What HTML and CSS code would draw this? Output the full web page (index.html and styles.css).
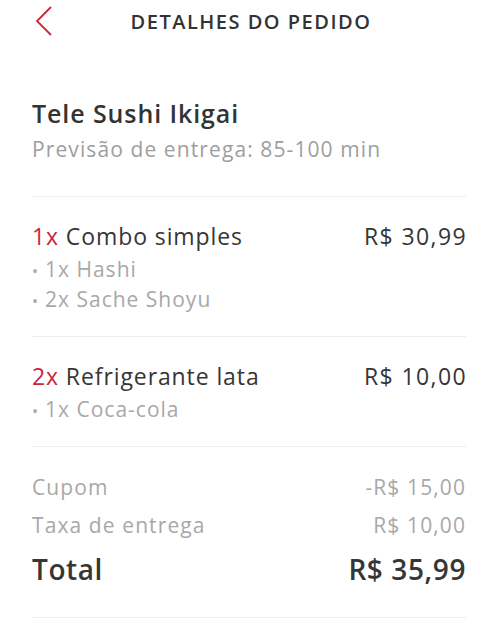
FILE: index.html
```html
<!DOCTYPE html>
<html lang="pt-br">
<head>
  <meta charset="UTF-8" />
  <meta name="viewport" content="width=device-width, initial-scale=1.0"/>
  <title>Detalhes do Pedido</title>
  <link rel="stylesheet" href="styles.css">
</head>
<body>

  <div class="topo">
    <button class="voltar" aria-label="Voltar">
      <svg width="18" height="30" viewBox="0 0 18 30">
        <polyline points="16,1 2,15 16,29" fill="none" stroke="#c8283c" stroke-width="1.8"/>
      </svg>
    </button>
    <h1>DETALHES DO PEDIDO</h1>
  </div>

  <div class="conteudo">
    <div class="secao restaurante">
      <h2>Tele Sushi Ikigai</h2>
      <p class="previsao">Previsão de entrega: 85-100 min</p>
    </div>

    <div class="secao item">
      <div class="linha">
        <span class="nome"><span class="qtd">1x</span> Combo simples</span>
        <span class="preco">R$ 30,99</span>
      </div>
      <ul class="extras">
        <li>1x Hashi</li>
        <li>2x Sache Shoyu</li>
      </ul>
    </div>

    <div class="secao item">
      <div class="linha">
        <span class="nome"><span class="qtd">2x</span> Refrigerante lata</span>
        <span class="preco">R$ 10,00</span>
      </div>
      <ul class="extras">
        <li>1x Coca-cola</li>
      </ul>
    </div>

    <div class="secao resumo">
      <div class="linha cinza">
        <span>Cupom</span>
        <span>-R$ 15,00</span>
      </div>
      <div class="linha cinza">
        <span>Taxa de entrega</span>
        <span>R$ 10,00</span>
      </div>
      <div class="linha total">
        <span>Total</span>
        <span>R$ 35,99</span>
      </div>
    </div>
  </div>

</body>
</html>
```

FILE: styles.css
```css
body {
  margin: 0;
  font-family: "Open Sans", Arial, sans-serif;
  background-color: #fff;
  color: #363636;
}

.topo {
  position: relative;
  height: 44px;
  display: flex;
  align-items: center;
  justify-content: center;
}

.voltar {
  position: absolute;
  left: 35px;
  top: 6px;
  border: none;
  background: none;
  padding: 0;
}

.topo h1 {
  margin: 0 0 0 2px;
  font-size: 20px;
  line-height: 44px;
  font-weight: 600;
  letter-spacing: 1.5px;
  color: #333;
}

.conteudo {
  padding: 0 34px 0 32px;
}

.secao {
  border-bottom: 1px solid #eeeeee;
}

.restaurante {
  padding: 54px 0 32px;
}

.restaurante h2 {
  margin: 0;
  font-size: 25px;
  line-height: 30px;
  font-weight: 600;
  letter-spacing: 0.9px;
  color: #333;
}

.previsao {
  margin: 6px 0 0;
  font-size: 21px;
  line-height: 30px;
  letter-spacing: 1.1px;
  color: #9e9e9e;
}

.item {
  padding: 24px 0 22px;
}

.linha {
  display: flex;
  justify-content: space-between;
  align-items: baseline;
}

.nome,
.preco {
  font-size: 23px;
  line-height: 30px;
  letter-spacing: 0.9px;
}

.preco {
  letter-spacing: 1.4px;
  margin-right: -1px;
}

.qtd {
  color: #c8283c;
}

.extras {
  list-style: none;
  margin: 3px 0 0;
  padding: 0;
}

.extras li {
  font-size: 21px;
  line-height: 30px;
  letter-spacing: 1px;
  color: #a8a8a8;
}

.extras li::before {
  content: "•";
  font-size: 16px;
  line-height: 0;
  margin-right: 6px;
}

.resumo {
  padding: 21px 0 26px;
}

.cinza {
  font-size: 21px;
  line-height: 38px;
  letter-spacing: 1.1px;
  color: #a8a8a8;
}

.total {
  font-size: 28px;
  line-height: 44px;
  font-weight: 600;
  letter-spacing: 0.6px;
  margin-top: 3px;
}
```
